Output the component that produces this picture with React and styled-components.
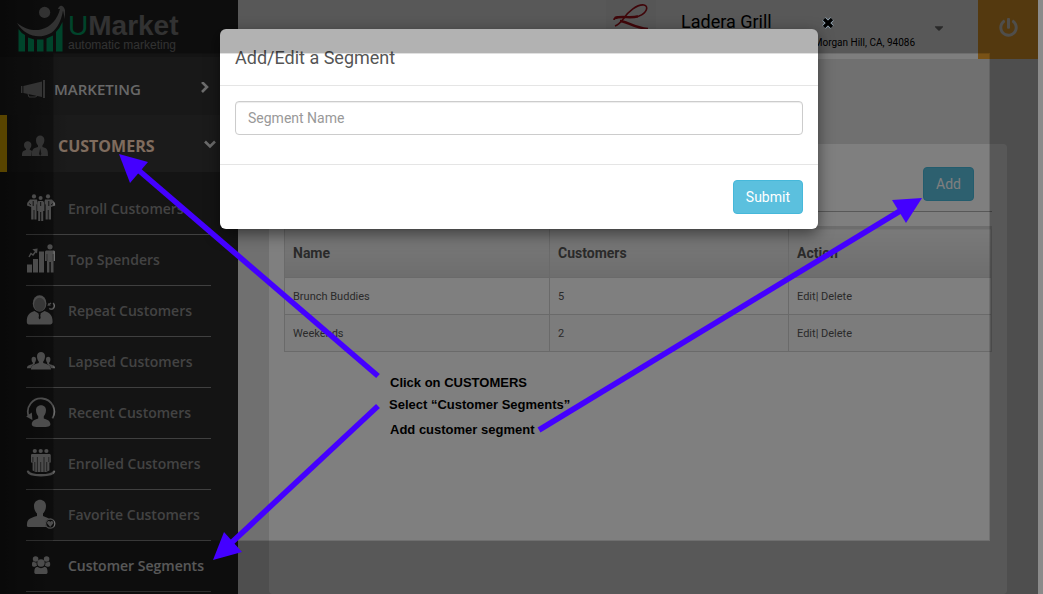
import React from 'react';
import styled, {createGlobalStyle} from 'styled-components';
import {FaPowerOff, FaCaretDown} from 'react-icons/fa';

const colors = {
	sidebar : '#292929',
	icon : '#dadada',
	accent : '#ffc400',
	orange : '#f3a52c',
	info : '#5bc0de',
	infoBorder : '#46b8da',
	green : '#00c47c',
	arrow : '#4400ff'
}

const GlobalStyle = createGlobalStyle`
	*{
		box-sizing: border-box;
	}
	body{
		margin: 0;
		overflow: hidden;
		font-family: Roboto, "Liberation Sans", sans-serif;
		font-size: 14px;
		line-height: 20px;
		color: #555;
		background-color: #8a8a8a;
	}
	button, input{
		font-family: inherit;
		font-size: 14px;
		line-height: 20px;
	}
`

const submenu = [
	{
		text : 'Enroll Customers',
		icon : <>
			<circle cx="8" cy="3.4" r="2.1" />
			<circle cx="22" cy="3.4" r="2.1" />
			<circle cx="14.6" cy="5" r="2" />
			<path d="M4 6.5 H11 L11.5 9 L10.5 12 V26.6 H8.4 V17 H7.6 V26.6 H5.2 V14 L1 12.5 L1.2 10 Z" />
			<path d="M19 6.5 H26 L29 10 L29.2 12.5 L25 14 V26.6 H22.6 V17 H21.8 V26.6 H19.6 V12 L18.5 9 Z" />
			<path d="M12.3 8 H17 L18.4 10 V18 H17.2 V28 H15.2 V19 H14.2 V28 H12.2 V18 H11.2 V10 Z" />
			<path d="M14.7 9 V13 M7.2 8 V13 M22.8 8 V13 M3 10.5 L5 12 M27 10.5 L25 12" stroke="#333" fill="none" />
		</>
	},
	{
		text : 'Top Spenders',
		icon : <>
			<path d="M1 20.5 H6 V28.4 H1 Z M7 15 H12 V28.4 H7 Z M13 7.6 H18 V28.4 H13 Z" />
			<path d="M3 13 L5 9.5 L7 11 L10 7" stroke={colors.icon} strokeWidth="1.4" fill="none" />
			<path d="M6.4 5.2 L11.6 4.4 L11 9.4 Z" />
			<circle cx="24" cy="2.8" r="2.6" />
			<path d="M19 7.5 L20 6.6 H28 L29 7.5 V17 H27.4 V28.6 H24.8 V18 H23.4 V28.6 H21 V17 H19 Z" />
			<path d="M21 10 V17 M27.2 10 V17" stroke="#444" strokeWidth="0.6" />
		</>
	},
	{
		text : 'Repeat Customers',
		icon : <>
			<path d="M0.8 27 C0.8 20 3 18 8.5 16 L13.5 19 L18.5 16 C24 18 26.6 20 26.6 27 C26.6 29 25 29.6 23 29.6 H4 C2 29.6 0.8 29 0.8 27 Z" />
			<ellipse cx="13.6" cy="8.4" rx="6.8" ry="8.2" />
			<ellipse cx="13.6" cy="9.6" rx="5.6" ry="6.8" fill="#a0a0a0" />
			<path d="M12.2 18.5 H15 L14.3 20 L14.6 23 L13.6 24.6 L12.6 23 L13 20 Z" fill="#222" />
			<path d="M23 9.4 L25 8.2 M27 8.2 A3.2 3.2 0 1 1 23.2 13.4" stroke={colors.icon} strokeWidth="1.5" fill="none" />
			<path d="M21.4 10.8 L22.4 8 L24.8 10.6 Z" />
		</>
	},
	{
		text : 'Lapsed Customers',
		icon : <>
			<path d="M11 10 C11 4.8 19 4.8 19 10 C19 13 18 14.6 17.2 15.6 V17 C22 18.6 25 19.2 25 23.6 H5 C5 19.2 8 18.6 12.8 17 V15.6 C12 14.6 11 13 11 10 Z" />
			<path d="M5.6 13 C5.6 10 10 10 10 13 C10 15 9.4 16 8.8 16.6 V18 C6.4 19.6 5.4 20.2 4.6 22.2 H1 C1 19.4 3 19.4 6.8 18 V16.6 C6 16 5.6 15 5.6 13 Z" />
			<path d="M24.4 13 C24.4 10 20 10 20 13 C20 15 20.6 16 21.2 16.6 V18 C23.6 19.6 24.6 20.2 25.4 22.2 H29 C29 19.4 27 19.4 23.2 18 V16.6 C24 16 24.4 15 24.4 13 Z" />
		</>
	},
	{
		text : 'Recent Customers',
		icon : <>
			<path d="M2.6 19 A13.2 13.2 0 1 1 26.4 21.4" stroke={colors.icon} strokeWidth="1.8" fill="none" />
			<path d="M0.2 19.6 L5.8 15.6 L6.4 23 Z" />
			<path d="M10 13 C10 6.6 20 6.6 20 13 C20 16.4 18.6 18.2 17.8 19.2 V21.6 C21.6 22.8 24.4 24 24.4 27.4 C24.4 30 19 30 15 30 S5.8 30 5.8 27.4 C5.8 24 8.4 22.8 12.2 21.6 V19.2 C11.4 18.2 10 16.4 10 13 Z" />
		</>
	},
	{
		text : 'Enrolled Customers',
		icon : <>
			<circle cx="8.8" cy="3" r="2.1" />
			<circle cx="14.7" cy="3" r="2.1" />
			<circle cx="20.4" cy="3" r="2.1" />
			<path d="M5.6 6 H24 L24.8 7 V14.5 H23.4 V22.5 L20 24 H10 L6.6 22.5 V14.5 H5 V7 Z" />
			<path d="M6.9 9 V14 M22.8 9 V14 M8.8 14 V23 M11.4 9 V24 M14.7 14 V24 M18 9 V24 M20.7 14 V23" stroke="#333" strokeWidth="0.7" />
			<path d="M2 23.6 C3 28.4 27 28.4 28 23.6" stroke={colors.icon} strokeWidth="2.4" strokeLinecap="round" fill="none" />
		</>
	},
	{
		text : 'Favorite Customers',
		icon : <>
			<path d="M8 7 C8 -1.4 20 -1.4 20 7 C20 11 18 13.4 17 14.6 V17 L23 19.4 C19.4 21 18.4 25.4 20.4 28 H2.4 C0.8 28 0.8 27 1 25 C1.4 20.6 2.6 19.4 11 17 V14.6 C10 13.4 8 11 8 7 Z" />
			<circle cx="24.2" cy="24.6" r="4.6" stroke={colors.icon} strokeWidth="1.3" fill="#222" />
			<path d="M24.2 28 L21.2 24.6 C20.4 21.8 23.6 21.2 24.2 23.2 C24.8 21.2 28 21.8 27.2 24.6 Z" />
		</>
	},
	{
		text : 'Customer Segments',
		active : true,
		icon : <>
			<circle cx="9.6" cy="9" r="2.8" />
			<circle cx="20.6" cy="9" r="2.8" />
			<circle cx="15" cy="13" r="3.7" />
			<path d="M8.3 22 C8.3 18.4 9.6 17 11.4 16.8 C13.6 18.6 16.4 18.6 18.6 16.8 C20.4 17 21.6 18.4 21.6 22 C21.6 23.4 20.8 24 19.6 24 H10.4 C9 24 8.3 23.4 8.3 22 Z" />
			<path d="M6 14.6 C6 12.4 6.6 11.6 7.6 11.6 C9 12.8 10 12.6 10.6 12.4 C10.4 14 10.8 15 11.2 15.8 C10 16 9.4 16.4 9 16.8 H7.6 C6.6 16.8 6 16 6 14.6 Z" />
			<path d="M24.2 14.6 C24.2 12.4 23.6 11.6 22.6 11.6 C21.2 12.8 20 12.6 19.4 12.4 C19.6 14 19.2 15 18.8 15.8 C20 16 20.6 16.4 21 16.8 H22.6 C23.6 16.8 24.2 16 24.2 14.6 Z" />
		</>
	}
]

const segments = [
	{
		name : 'Brunch Buddies',
		customers : 5
	},
	{
		name : 'Weekends',
		customers : 2
	}
]

function Brand(){
	return(
		<StyledBrand>
			<svg width="50" height="50" viewBox="0 0 50 50">
				<path
					d="M2.5 25 Q5 29 9 31 V47.5 H2.5 Z M12 33.5 L18 35.5 V47.5 H12 Z M21 35.5 H27.5 V47.5 H21 Z M30.5 34.5 L37 31.5 V47.5 H30.5 Z M40 28 Q44 24 46.5 18 V47.5 H40 Z"
					fill={colors.green}
				/>
				<path d="M1 19 C10 26 18 27 25 25.5 C35 23 41.6 15 44 5 L42 5 C43 1 47 0 49 6 V15 L47 6.4 C45 18 40 27 33 30 C22 35 9 32 1 19 Z" fill="#909090" />
				<circle cx="28.6" cy="8.4" r="5.6" fill="#909090" />
			</svg>
			<div>
				<strong><i>U</i>Market</strong>
				<small>automatic marketing</small>
			</div>
		</StyledBrand>
	)
}

function Sidebar(){
	return(
		<StyledSidebar>
			<Brand />
			<MenuItem href="#marketing">
				<svg width="26" height="24" viewBox="0 0 26 24" fill="#949494">
					<path d="M0 9 H1.4 V16 H0 Z M2.4 9 L21 4.4 V20 L2.4 16 Z M22 3 H24 V21 H22 Z" />
					<path d="M7 17 L8 20 H14 Q16 20 16 18" stroke="#949494" strokeWidth="1" fill="none" />
				</svg>
				<span>MARKETING</span>
				<svg width="14" height="14" viewBox="0 0 14 14" className="chevron">
					<path d="M4 0 L9 5 L4 10" />
				</svg>
			</MenuItem>
			<MenuItem href="#customers" $active>
				<svg width="26" height="24" viewBox="0 0 26 24" fill="#949494">
					<path d="M2 11 C2 6 9.4 6 9.4 11 C9.4 13.4 8 14.4 7.6 15.4 L10 17 L9 22 H0 C0 17 1 17 4 16 V15 C3 14 2 13 2 11 Z" />
					<path d="M14 6 C14 0 22.4 0 22.4 6 C22.4 9 21 10.4 20.4 11.4 V13 C25 14.4 26 15 26 22 H9.6 C9.8 15 11 14.4 16 13 V11.4 C15 10.4 14 9 14 6 Z" />
					<path d="M18.2 14 L19.4 20 L18.2 22 L17 20 Z" fill="#383838" />
				</svg>
				<span>CUSTOMERS</span>
				<svg width="14" height="14" viewBox="0 0 14 14" className="chevron">
					<path d="M2 2.5 L7 7.5 L12 2.5" />
				</svg>
			</MenuItem>
			<Submenu>
				{submenu.map((item, index) =>
					<SubmenuItem key={index} $active={item.active}>
						<a href="#segments">
							<svg width="30" height="31" viewBox="0 0 30 31" fill={colors.icon}>{item.icon}</svg>
							{item.text}
						</a>
					</SubmenuItem>
				)}
			</Submenu>
		</StyledSidebar>
	)
}

function Header(){
	return(
		<StyledHeader>
			<RestaurantLogo viewBox="0 0 50 50">
				<path d="M8 20 C8 14 24 19 33 16 C41 13 43 6 38 5 C31 4 22 12 18 18 C15 22 12 25 9 26" />
				<path d="M9 18 C16 15.6 24 18.6 32 16.4 M14 21 C20 21 28 28 42 29" strokeWidth="2.4" />
			</RestaurantLogo>
			<Restaurant>
				<h1>Ladera Grill</h1>
				<address>Morgan Hill, CA, 94086</address>
			</Restaurant>
			<IconButton aria-label="Account menu"><FaCaretDown size={14} /></IconButton>
			<PowerButton aria-label="Log out"><FaPowerOff size={19} /></PowerButton>
		</StyledHeader>
	)
}

function SegmentTable(){
	return(
		<Table>
			<thead>
				<tr>
					<th>Name</th>
					<th>Customers</th>
					<th>Action</th>
				</tr>
			</thead>
			<tbody>
				{segments.map((segment) =>
					<tr key={segment.name}>
						<td>{segment.name}</td>
						<td>{segment.customers}</td>
						<td><a href="#edit">Edit</a>| <a href="#delete">Delete</a></td>
					</tr>
				)}
			</tbody>
		</Table>
	)
}

function SegmentModal(){
	return(
		<Backdrop>
			<Modal role="dialog" aria-label="Add/Edit a Segment">
				<ModalHeader>Add/Edit a Segment</ModalHeader>
				<ModalBody>
					<TextInput type="text" placeholder="Segment Name" aria-label="Segment Name" />
				</ModalBody>
				<ModalFooter>
					<Button>Submit</Button>
				</ModalFooter>
			</Modal>
		</Backdrop>
	)
}

function Annotations(){
	return(
		<AnnotationLayer>
			<CloseButton aria-label="Close">
				<svg width="14" height="14" viewBox="0 0 14 14">
					<path d="M3 3 L11 11 M11 3 L3 11" stroke="#9fb4c4" strokeWidth="4.8" />
					<path d="M3 3 L11 11 M11 3 L3 11" stroke="#000" strokeWidth="3.4" />
				</svg>
			</CloseButton>
			<svg width="1043" height="594" viewBox="0 0 1043 594">
				<g stroke={colors.arrow} strokeWidth="5.6">
					<path d="M378 376 L136 168" />
					<path d="M378 406 L229 545" />
					<path d="M539 430 L900 211" />
				</g>
				<g fill={colors.arrow}>
					<path d="M119 154 L148 162 L130 183 Z" />
					<path d="M213 560 L224 532 L242 552 Z" />
					<path d="M922 198 L892 200 L906 223 Z" />
				</g>
			</svg>
			<Note $x={390} $y={373}>Click on CUSTOMERS</Note>
			<Note $x={389} $y={395}>Select “Customer Segments”</Note>
			<Note $x={390} $y={420}>Add customer segment</Note>
		</AnnotationLayer>
	)
}

export default function App(){
	return(
		<>
			<GlobalStyle />
			<Page>
				<Sidebar />
				<Main>
					<Header />
					<Content>
						<Card>
							<Toolbar>
								<Button>Add</Button>
							</Toolbar>
							<SegmentTable />
						</Card>
					</Content>
				</Main>
				<SegmentModal />
				<Spotlight />
			</Page>
			<Annotations />
		</>
	)
}

const Page = styled.div`
	height: 100vh;
	margin-right: 5px;
	display: flex;
	overflow: hidden;
	position: relative;
	background-color: #e0e0e0;
`

const StyledSidebar = styled.nav`
	flex: 0 0 238px;
	font-family: "Open Sans", "Noto Sans", sans-serif;
	font-weight: 600;
	background: linear-gradient(to right, #1c1c1c, ${colors.sidebar} 60px);
	a{
		text-decoration: none;
	}
`

const StyledBrand = styled.div`
	height: 57px;
	padding: 4px 16px;
	display: flex;
	gap: 2px;
	font-family: "Liberation Sans", sans-serif;
	color: #909090;
	svg{
		flex: none;
	}
	div{
		display: flex;
		flex-direction: column;
		padding-top: 10px;
		white-space: nowrap;
	}
	strong{
		font-size: 28px;
		line-height: 24px;
	}
	i{
		font-style: normal;
		font-weight: normal;
		color: ${colors.green};
	}
	small{
		font-size: 12px;
		line-height: 14px;
		font-weight: normal;
	}
`

const MenuItem = styled.a`
	height: ${({$active}) => $active ? 57 : 58}px;
	padding: 5px ${({$active}) => $active ? 21 : 26}px 0 ${({$active}) => $active ? 15 : 21}px;
	display: flex;
	align-items: center;
	gap: ${({$active}) => $active ? 10 : 7}px;
	font-size: ${({$active}) => $active ? 16 : 15}px;
	font-weight: ${({$active}) => $active ? 700 : 600};
	color: ${({$active}) => $active ? '#ffd9bd' : '#d0d0d0'};
	background: linear-gradient(to right, #222, ${({$active}) => $active ? '#363636' : '#303030'} 60px);
	border-left: ${({$active}) => $active ? `7px solid ${colors.accent}` : 'none'};
	span{
		flex: 1;
	}
	.chevron{
		fill: none;
		stroke: #d8d8d8;
		stroke-width: 2.6;
	}
`

const Submenu = styled.ul`
	margin: 0;
	padding: 12px 0 0;
	list-style: none;
`

const SubmenuItem = styled.li`
	margin: 0 27px 0 26px;
	border-bottom: 1px solid #808080;
	a{
		height: 50px;
		padding-bottom: 1px;
		display: flex;
		align-items: center;
		gap: 12px;
		font-size: 14px;
		white-space: nowrap;
		color: ${({$active}) => $active ? '#fff' : '#868686'};
	}
`

const Main = styled.main`
	flex: 1;
	min-width: 0;
	display: flex;
	flex-direction: column;
`

const StyledHeader = styled.header`
	height: 59px;
	display: flex;
	justify-content: flex-end;
	background-color: #fcfcfc;
`

const RestaurantLogo = styled.svg`
	width: 50px;
	height: 50px;
	background-color: #f6f6f6;
	fill: none;
	stroke: #b8141f;
	stroke-width: 1.6;
`

const Restaurant = styled.div`
	width: 234px;
	margin-left: 25px;
	display: flex;
	flex-direction: column;
	color: #000;
	h1{
		margin: 0;
		padding-top: 10px;
		font-size: 18px;
		line-height: 24px;
		font-weight: normal;
	}
	address{
		align-self: flex-end;
		font-size: 10px;
		line-height: 18px;
		font-style: normal;
	}
`

const IconButton = styled.button`
	width: 48px;
	padding: 0;
	border: 0;
	color: #777;
	background: none;
`

const PowerButton = styled.button`
	width: 60px;
	margin-left: 15px;
	padding: 0;
	border: 0;
	color: #e4e0d8;
	background-color: ${colors.orange};
`

const Content = styled.section`
	flex: 1;
	padding: 85px 31px 0;
	display: flex;
	flex-direction: column;
`

const Card = styled.div`
	flex: 1;
	padding: 0 15px;
	border-radius: 4px;
	background-color: #fff;
`

const Toolbar = styled.div`
	padding: 23px 18px 10px;
	margin-bottom: 14px;
	display: flex;
	justify-content: flex-end;
	border-bottom: 1px solid #b0b0b0;
`

const Button = styled.button`
	padding: 6px 12px;
	border: 1px solid ${colors.infoBorder};
	border-radius: 4px;
	color: #fff;
	background-color: ${colors.info};
`

const Table = styled.table`
	width: 100%;
	border-collapse: collapse;
	border: 1px solid #d4d4d4;
	th, td{
		padding: 8px;
		text-align: left;
		border: 1px solid #d4d4d4;
	}
	th{
		height: 50px;
		font-size: 14px;
		font-weight: bold;
		background: linear-gradient(#f4f4f4, #dcdcdc);
		border-top: 3px solid #dadada;
	}
	th:first-child{
		width: 265px;
	}
	th:nth-child(2){
		width: 239px;
	}
	td{
		height: 37px;
		padding: 9px 8px 7px;
		font-size: 11px;
	}
	tbody tr:nth-child(even){
		background-color: #f8f8f8;
	}
	a{
		color: inherit;
		text-decoration: none;
	}
`

const Backdrop = styled.div`
	position: absolute;
	inset: 0;
	background-color: rgba(0,0,0,0.5);
`

const Modal = styled.form`
	max-width: 598px;
	margin: 29px auto;
	border-radius: 6px;
	background-color: #fff;
	box-shadow: 0 5px 15px rgba(0,0,0,0.5);
`

const ModalHeader = styled.h4`
	margin: 0;
	padding: 16px 15px 14px;
	font-size: 18px;
	line-height: 26px;
	font-weight: normal;
	border-bottom: 1px solid #e5e5e5;
`

const ModalBody = styled.div`
	padding: 15px 15px 29px;
`

const TextInput = styled.input`
	width: 100%;
	height: 34px;
	display: block;
	padding: 6px 12px;
	border: 1px solid #ccc;
	border-radius: 4px;
	box-shadow: inset 0 1px 1px rgba(0,0,0,0.075);
	&::placeholder{
		color: #999;
	}
`

const ModalFooter = styled.div`
	padding: 15px;
	text-align: right;
	border-top: 1px solid #e5e5e5;
`

// darkens everything outside of its own box
const Spotlight = styled.div`
	position: absolute;
	inset: 53px 48px 53px 53px;
	border: 1px solid rgba(0,0,0,0.12);
	box-shadow: 0 0 0 2000px rgba(0,0,0,0.3);
	pointer-events: none;
`

const AnnotationLayer = styled.div`
	position: absolute;
	inset: 0;
	pointer-events: none;
	font-family: "Liberation Sans", sans-serif;
	svg{
		display: block;
	}
`

const CloseButton = styled.button`
	position: absolute;
	top: 16px;
	left: 821px;
	padding: 0;
	border: 0;
	background: none;
	pointer-events: auto;
`

const Note = styled.p`
	position: absolute;
	left: ${({$x}) => $x}px;
	top: ${({$y}) => $y}px;
	margin: 0;
	font-size: 13px;
	line-height: 20px;
	font-weight: bold;
	white-space: nowrap;
	color: #000;
`
